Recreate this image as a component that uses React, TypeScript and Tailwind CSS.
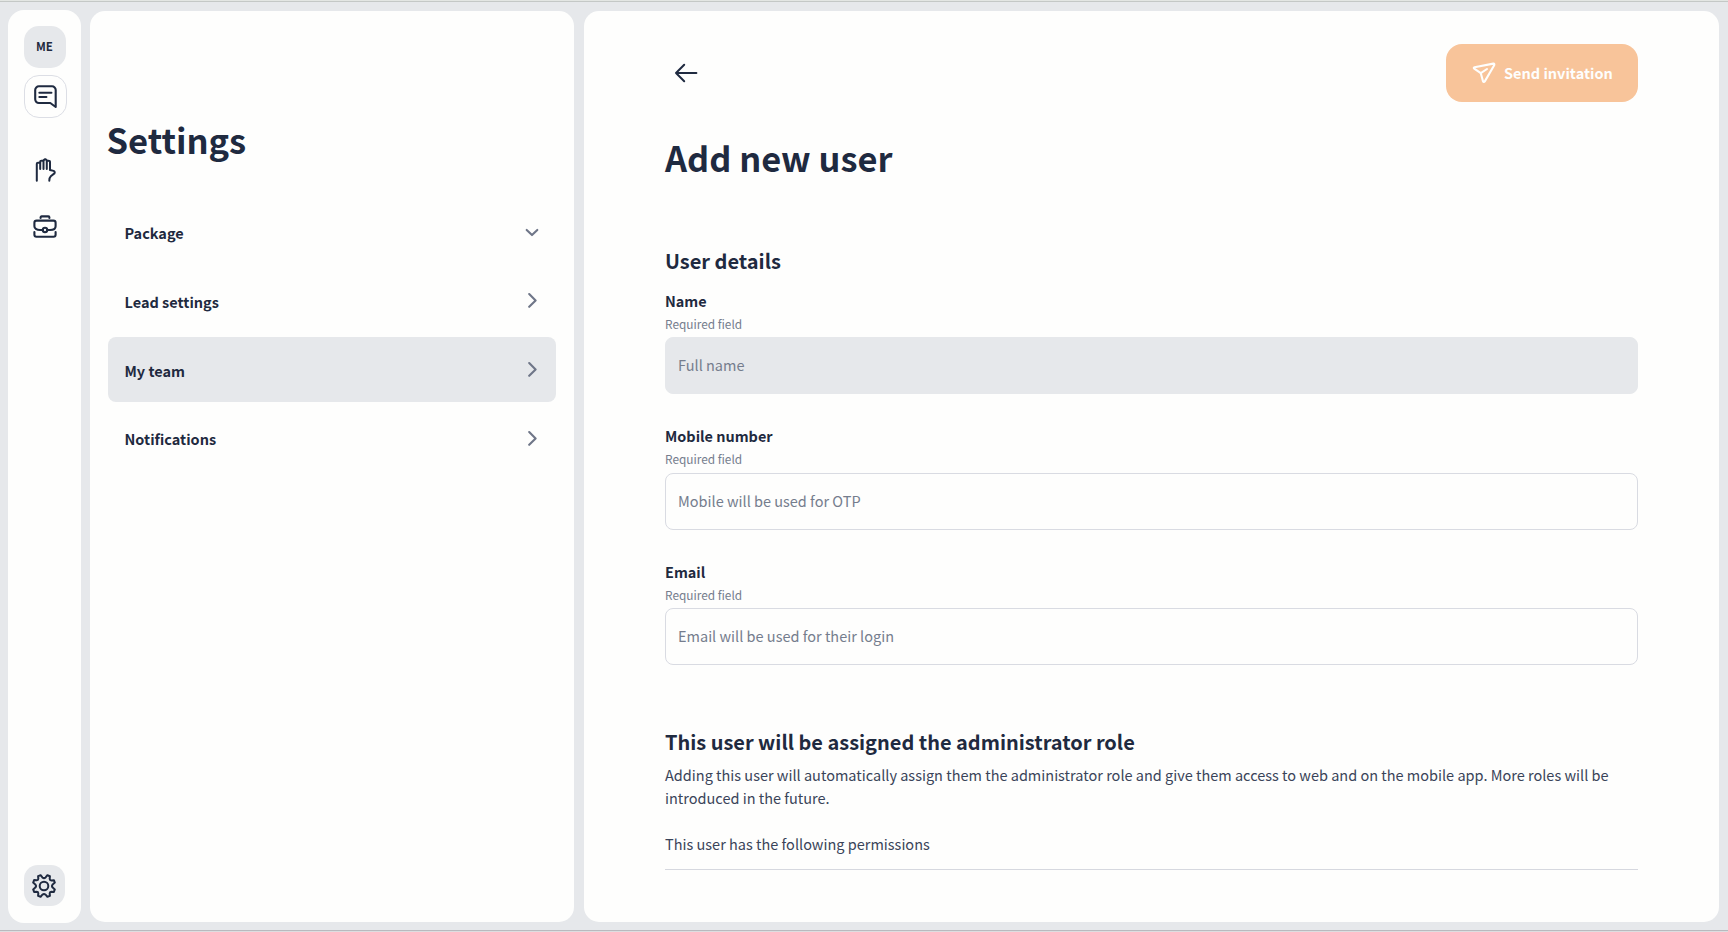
import React from "react";

function ChatIcon() {
  return (
    <svg width="24" height="24" viewBox="0 0 24 24" fill="none" stroke="currentColor" strokeWidth="2.1" strokeLinecap="round" strokeLinejoin="round">
      <path d="M22.7 22 17.3 18H5.9A3.7 3.7 0 0 1 2.2 14.3V5A3.7 3.7 0 0 1 5.9 1.3H19A3.7 3.7 0 0 1 22.7 5Z" />
      <path d="M6.3 7.8H18.5M6.3 12H13.5" strokeWidth="1.9" />
    </svg>
  );
}

function HandIcon() {
  return (
    <svg width="24" height="24" viewBox="0 0 24 24" fill="none" stroke="currentColor" strokeWidth="2" strokeLinecap="round" strokeLinejoin="round">
      <path d="M3.8 22.8V5.8Q3.8 4.8 5 4.8H7.2V3.6Q7.2 2.7 8.4 2.7H10L11.8 1.2H12.6L14.2 2.7H15.4Q17 2.7 17 4V12L20.6 12.9Q22.4 13.8 21.4 15.4L17.8 18.2Q16.3 19.6 16.3 22.8" />
      <path d="M7.2 4.8V11M10.5 2.7V11M13.8 2.7V11" />
    </svg>
  );
}

function BriefcaseIcon() {
  return (
    <svg width="24" height="24" viewBox="0 0 24 24" fill="none" stroke="currentColor" strokeWidth="2.1" strokeLinecap="round" strokeLinejoin="round">
      <path d="M7.6 3V2.4Q7.6 1.4 8.6 1.4H15.4Q16.4 1.4 16.4 2.4V3" />
      <path d="M9.6 15H7C3.5 15 1.4 13.4 1.4 11.2V7.8Q1.4 5.6 3.6 5.6H20.4Q22.6 5.6 22.6 7.8V11.2C22.6 13.4 20.5 15 17 15H14.4" />
      <circle cx="12" cy="15" r="2.2" />
      <path d="M1.4 17V19.8Q1.4 21.8 3.4 21.8H20.6Q22.6 21.8 22.6 19.8V17" />
    </svg>
  );
}

function GearIcon() {
  return (
    <svg width="24" height="24" viewBox="0 0 24 24" fill="none" stroke="currentColor" strokeWidth="2" strokeLinecap="round" strokeLinejoin="round">
      <circle cx="12" cy="12" r="4.3" />
      <path d="M8.6 1.2 10.4 3.4Q12 4.8 13.6 3.4L15.4 1.2 17.9 2.2 17.7 4.9Q17.8 6.4 19.3 6.4L21.9 6.2 22.8 8.6 20.7 10.4Q19.3 12 20.7 13.6L22.8 15.4 21.9 17.9 19.2 17.7Q17.7 17.8 17.7 19.3L17.9 21.9 15.4 22.8 13.6 20.7Q12 19.3 10.4 20.7L8.6 22.8 6.1 21.9 6.3 19.2Q6.2 17.7 4.7 17.7L2.1 17.9 1.2 15.4 3.3 13.6Q4.7 12 3.3 10.4L1.2 8.6 2.1 6.1 4.8 6.3Q6.3 6.2 6.3 4.7L6.1 2.1Z" />
    </svg>
  );
}

function SendIcon() {
  return (
    <svg width="24" height="24" viewBox="0 0 24 24" fill="none" stroke="currentColor" strokeWidth="2.1" strokeLinecap="round" strokeLinejoin="round">
      <path d="M21.3 2.6 2.6 6.2Q1.2 6.6 2.2 7.6L8.8 12.2 11 20.2Q11.8 21.8 12.8 20.4L22.2 4.2Q22.8 2.4 21.3 2.6Z" />
      <path d="M8.8 12.2 15 8" />
    </svg>
  );
}

function Chevron({ down = false }: { down?: boolean }) {
  return (
    <svg width="16" height="16" viewBox="0 0 16 16" fill="none" stroke="currentColor" strokeWidth="2.1" strokeLinecap="round" strokeLinejoin="round" className="text-[#6f7688]">
      <path d={down ? "M2.7 5.9 8 11.1 13.3 5.9" : "M5.2 2 11.6 8.4 5.2 14.8"} />
    </svg>
  );
}

const menu = [
  { label: "Package", down: true, active: false },
  { label: "Lead settings", down: false, active: false },
  { label: "My team", down: false, active: true },
  { label: "Notifications", down: false, active: false },
];

const fields = [
  { label: "Name", placeholder: "Full name", filled: true },
  { label: "Mobile number", placeholder: "Mobile will be used for OTP", filled: false },
  { label: "Email", placeholder: "Email will be used for their login", filled: false },
];

export default function App() {
  return (
    <div className="flex h-[932px] w-[1728px] flex-col overflow-hidden bg-[#e6e8eb] font-['Noto_Sans_CJK_SC',sans-serif] text-[#1f2a40]">
      <div className="h-0.5 shrink-0 border-b border-[#c4c8c6] bg-[#e3e6e3]" />
      <div className="flex min-h-0 flex-1 pr-[9px] pl-2">
        <nav className="mt-2 mb-[7px] flex w-[73px] flex-col items-center rounded-[16px] bg-[#fefefd] pt-4 pb-[17px]">
          <div className="flex size-[42px] items-center justify-center rounded-[15px] bg-[#e6e8eb] pb-[2px] text-[11.5px] leading-4 font-bold">ME</div>
          <button className="mt-[7px] ml-px flex size-[43px] items-center justify-center rounded-[15px] border border-[#dcdee5]"><ChatIcon /></button>
          <button className="mt-10 ml-px"><HandIcon /></button>
          <button className="mt-[33px]"><BriefcaseIcon /></button>
          <button className="mt-auto flex size-[41px] items-center justify-center rounded-[14px] bg-[#e6e8eb] pr-px"><GearIcon /></button>
        </nav>

        <aside className="mt-[9px] mb-2 ml-[9px] w-[484px] rounded-[15px] bg-[#fefefd] px-[18px]">
          <h1 className="mt-[106px] -ml-[1.5px] text-[34.5px] leading-[44px] font-bold">Settings</h1>
          <ul className="mt-[38.25px] flex flex-col gap-[3.67px]">
            {menu.map((m) => (
              <li key={m.label} className={`flex h-[65px] items-center justify-between rounded-lg pr-4 pl-[16.5px] text-[14.5px] font-bold ${m.active ? "bg-[#e6e8eb]" : ""}`}>
                <span className="pt-[3px]">{m.label}</span>
                <Chevron down={m.down} />
              </li>
            ))}
          </ul>
        </aside>

        <main className="mt-[9px] mb-2 ml-[10px] flex-1 rounded-[15px] bg-[#fefefd] px-[81px]">
          <div className="mt-[33px] flex h-[58px] items-center justify-between">
            <svg width="24" height="24" viewBox="0 0 24 24" fill="none" stroke="currentColor" strokeWidth="2" strokeLinecap="round" strokeLinejoin="round" className="ml-[9px]">
              <path d="M22.4 12H2M10.2 3.8 2 12 10.2 20.2" />
            </svg>
            <button className="flex h-[58px] w-48 items-center gap-2 rounded-[16px] bg-[#f8c49a] pl-[26px] text-[14.5px] font-bold text-[#fefefd]">
              <SendIcon />
              <span>Send invitation</span>
            </button>
          </div>
          <h2 className="mt-[33px] text-[34.4px] leading-[44px] font-bold">Add new user</h2>
          <h3 className="mt-[68px] text-[20px] leading-7 font-bold">User details</h3>
          <div className="mt-[14px] flex flex-col gap-[30.2px]">
            {fields.map((f) => (
              <label key={f.label} className="flex h-[105.2px] flex-col">
                <span className="text-[14.45px] leading-6 font-bold">{f.label}</span>
                <span className="h-[24.2px] text-[11.85px] leading-[22px] text-[#757d8d]">Required field</span>
                <input
                  placeholder={f.placeholder}
                  className={`h-[57px] w-full rounded-lg border px-3 pb-[2px] text-[14.5px] placeholder:text-[#757d8d] ${f.filled ? "border-[#e6e8eb] bg-[#e6e8eb]" : "border-[#d9dbe2]"}`}
                />
              </label>
            ))}
          </div>
          <h3 className="mt-[63.4px] text-[19.97px] leading-7 font-bold">This user will be assigned the administrator role</h3>
          <p className="mt-2 text-[14.51px] leading-[22.4px] text-[#3a4459]">
            Adding this user will automatically assign them the administrator role and give them access to web and on the mobile app. More roles will be introduced in the future.
          </p>
          <p className="mt-6 border-b border-[#d6d8df] pb-[13px] text-[14.51px] leading-[22.4px] text-[#3a4459]">This user has the following permissions</p>
        </main>
      </div>
      <div className="h-0.5 shrink-0 border-t border-[#b9b9be] bg-[#dddde0]" />
    </div>
  );
}
